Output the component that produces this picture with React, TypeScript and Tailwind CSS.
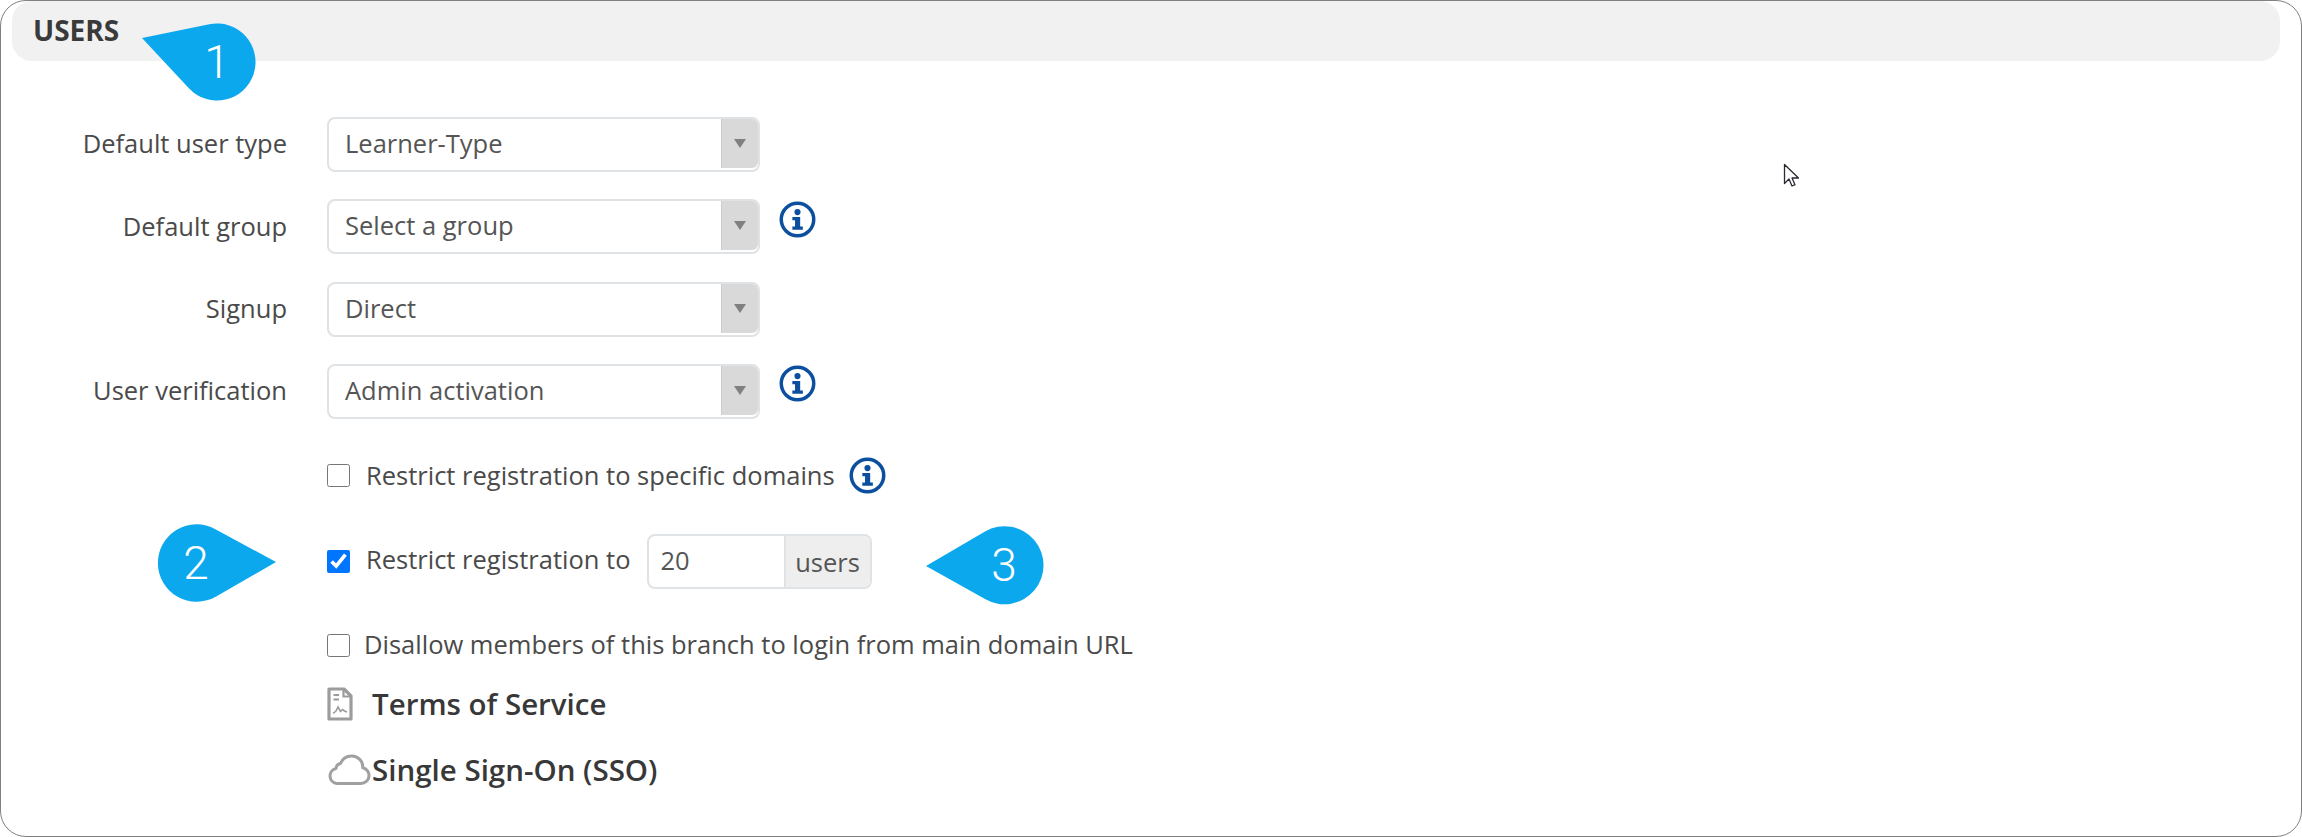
const font = "font-['Open_Sans',sans-serif]";

function InfoIcon({ className }: { className?: string }) {
  return (
    <svg viewBox="0 0 36 36" className={`h-[37px] w-[37px] shrink-0 ${className ?? ""}`}>
      <circle cx="18" cy="18" r="15.8" fill="none" stroke="#0b4f9e" strokeWidth="3.4" />
      <circle cx="18" cy="10.8" r="3" fill="#0b4f9e" />
      <path d="M13 15.5h7.6v9.3h2.6v3.2H13v-3.2h2.6v-6.1H13z" fill="#0b4f9e" />
    </svg>
  );
}

function SelectBox({ label, value, info }: { label: string; value: string; info?: boolean }) {
  return (
    <div className="flex h-[55px] items-center">
      <div className="mb-[2px] w-[286px] text-right text-[25.5px] text-[#4a4a4a]">{label}</div>
      <div className="ml-[40px] flex h-[55px] w-[433px] items-stretch overflow-hidden rounded-[8px] border-2 border-[#dfe3e6] bg-white">
        <div className="mb-[3px] flex flex-1 items-center pl-[16px] text-[25.5px] text-[#555]">{value}</div>
        <div className="mb-[2px] flex w-[37px] items-center justify-center rounded-br-[6px] border-l border-[#cccccc] bg-[#d9d9d9]">
          <div className="h-0 w-0 border-x-[6px] border-t-[9px] border-x-transparent border-t-[#808080]" />
        </div>
      </div>
      {info && <InfoIcon className="mb-[15px] ml-[19px]" />}
    </div>
  );
}

function Callout({
  className,
  viewBox,
  d,
  digit,
  digitClass,
}: {
  className: string;
  viewBox: string;
  d: string;
  digit: string;
  digitClass: string;
}) {
  return (
    <div className={`absolute h-[80px] ${className}`}>
      <svg viewBox={viewBox} className="h-full w-full">
        <path d={d} fill="#0ba8ee" />
      </svg>
      <span className={`absolute flex h-[78px] w-[78px] items-center justify-center font-['Roboto',sans-serif] text-[46px] font-light text-white ${digitClass}`}>
        {digit}
      </span>
    </div>
  );
}

export default function App() {
  return (
    <div className={`relative h-[837px] w-[2302px] overflow-hidden rounded-[26px] border border-[#808080] bg-white ${font}`}>
      <div className="ml-[11px] mr-[21px] flex h-[60px] items-center rounded-[20px] bg-[#f1f1f1] pl-[21px]">
        <span className="mb-[2px] text-[28px] font-bold text-[#3a3a3a]">USERS</span>
      </div>

      <div className="mt-[56px] flex flex-col gap-[27.33px]">
        <SelectBox label="Default user type" value="Learner-Type" />
        <SelectBox label="Default group" value="Select a group" info />
        <SelectBox label="Signup" value="Direct" />
        <SelectBox label="User verification" value="Admin activation" info />
      </div>

      <div className="pl-[326px] text-[25.5px] text-[#4a4a4a]">
        <div className="mt-[45px] flex h-[24px] items-center">
          <input type="checkbox" className="m-0 h-[23px] w-[23px] accent-[#0075ff]" />
          <span className="mb-[2px] ml-[16px]">Restrict registration to specific domains</span>
          <InfoIcon className="ml-[14px]" />
        </div>

        <div className="mt-[46px] flex h-[55px] items-center">
          <input type="checkbox" defaultChecked className="m-0 h-[23px] w-[23px] accent-[#0075ff]" />
          <span className="mb-[4px] ml-[16px]">Restrict registration to</span>
          <div className="ml-[16px] flex h-[55px] w-[225px] overflow-hidden rounded-[8px] border-2 border-[#dfe3e6] text-[#555]">
            <div className="mb-[2px] flex w-[135px] items-center pl-[12px]">20</div>
            <div className="flex flex-1 items-center justify-center border-l-2 border-[#dfe3e6] bg-[#eeeeee] pt-[1px]">users</div>
          </div>
        </div>

        <div className="mt-[45px] flex h-[24px] items-center">
          <input type="checkbox" className="m-0 h-[23px] w-[23px] accent-[#0075ff]" />
          <span className="mb-[4px] ml-[14px]">Disallow members of this branch to login from main domain URL</span>
        </div>

        <div className="mt-[26px] flex h-[40px] items-center text-[29.5px] font-[570] text-[#383838]">
          <svg viewBox="0 0 26 34" className="h-[34px] w-[26px] shrink-0" fill="none" stroke="#9c9c9c">
            <path d="M2 2h15l7 7v23H2z" strokeWidth="3.2" strokeLinejoin="round" />
            <path d="M16.5 2v7.5h7.5" strokeWidth="2.2" />
            <path d="M6.5 8h5.5M6.5 12.5h5.5" strokeWidth="2" />
            <path d="M6 26.5l3-2.5 2-4 2.5 4.5 2-2 2 1.5 2.5 1" strokeWidth="1.6" />
          </svg>
          <span className="ml-[19px]">Terms of Service</span>
        </div>

        <div className="mt-[26px] flex h-[40px] items-center text-[29.5px] font-[570] text-[#383838]">
          <svg viewBox="0 0 44 32" className="h-[32px] w-[44px] shrink-0" fill="none" stroke="#a0a0a0" strokeWidth="3">
            <path d="M10 29.5h24a8 8 0 0 0 1.8-15.8A11 11 0 0 0 24.5 2 12 12 0 0 0 13.5 9.5 5.5 5.5 0 0 0 9 14.5 7.6 7.6 0 0 0 10 29.5z" strokeLinejoin="round" />
          </svg>
          <span className="ml-[1px]">Single Sign-On (SSO)</span>
        </div>
      </div>

      {/* numbered callouts sit over the form */}
      <Callout
        className="left-[139px] top-[22px] w-[116px]"
        viewBox="140 23 116 80"
        d="M142 38L209.3 24.3A38.5 38.5 0 1 1 188.9 88.3Z"
        digit="1"
        digitClass="left-[38px] top-[0px]"
      />
      <Callout
        className="left-[155px] top-[522px] w-[122px]"
        viewBox="156 523 122 80"
        d="M276 562L215.4 529.2A38.7 38.7 0 1 0 216.2 596.4Z"
        digit="2"
        digitClass="left-[1px] top-[1px]"
      />
      <Callout
        className="left-[923px] top-[524px] w-[122px]"
        viewBox="924 525 122 80"
        d="M926 566L985 531.5A39 39 0 1 1 985 599Z"
        digit="3"
        digitClass="left-[41px] top-[1px]"
      />

      {/* mouse pointer */}
      <svg viewBox="0 0 18 26" className="absolute left-[1782px] top-[162px] h-[26px] w-[18px]">
        <path d="M1.5 1.5v19l4.5-4.5 3 7 3-1.3-3-6.7h6.5z" fill="#fff" stroke="#2a2a35" strokeWidth="1.3" strokeLinejoin="round" />
      </svg>
    </div>
  );
}
